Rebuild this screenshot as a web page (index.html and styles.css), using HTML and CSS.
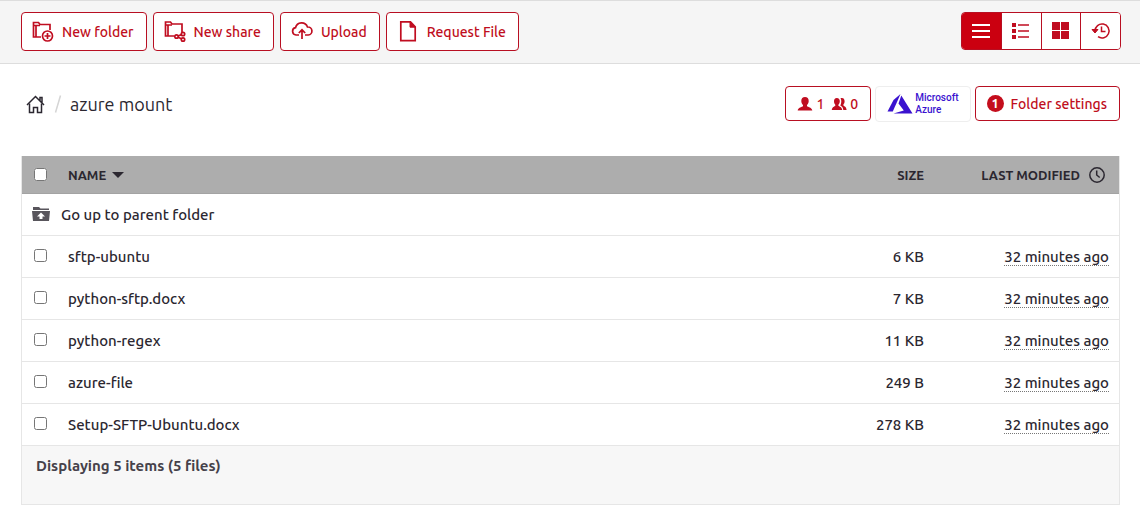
FILE: index.html
```
<!DOCTYPE html>
<html lang="en">
<head>
    <meta charset="UTF-8">
    <meta name="viewport" content="width=device-width, initial-scale=1.0">
    <title>azure mount</title>
    <link rel="stylesheet" href="styles.css">
</head>
<body>
    <header class="toolbar">
        <div class="actions">
            <button type="button" class="btn">
                <svg class="icon" viewBox="0 0 22 22" fill="none" stroke="currentColor" stroke-width="1.700">
                    <path d="M9 16H1.500V1.500h5l1.500 2h10v5.500"/>
                    <path d="M2 4.500h6M4 4v12"/>
                    <circle cx="15.500" cy="15" r="5"/>
                    <path d="M15.500 12v6M12.500 15h6"/>
                </svg>
                New folder
            </button>
            <button type="button" class="btn">
                <svg class="icon" viewBox="0 0 22 22" fill="none" stroke="currentColor" stroke-width="1.700">
                    <path d="M10 15H1.500V1h5l1.500 2h10v8.500"/>
                    <path d="M2 4h6M4 3.500v11.500"/>
                    <circle cx="12.500" cy="15.500" r="1.700"/>
                    <circle cx="19" cy="13" r="1.700"/>
                    <circle cx="19" cy="18.500" r="1.700"/>
                    <path d="M14 15l3.500-1.400M14 16.200l3.500 1.600"/>
                </svg>
                New share
            </button>
            <button type="button" class="btn">
                <svg class="icon" viewBox="0 0 22 22" fill="none" stroke="currentColor" stroke-width="1.700">
                    <path d="M8 14H5a3.700 3.700 0 0 1-.5-7.300 6.300 6.300 0 0 1 12-.7 4 4 0 0 1 .8 8h-3.300"/>
                    <path d="M11 18V9M7.800 12L11 8.800l3.200 3.200"/>
                </svg>
                Upload
            </button>
            <button type="button" class="btn">
                <svg class="icon" viewBox="0 0 22 22" fill="none" stroke="currentColor" stroke-width="1.700">
                    <path d="M3.800 .9h9.700l4.700 5v13.800H3.800z"/>
                    <path d="M13 1v5.200h5z" fill="currentColor" stroke-width="1"/>
                </svg>
                Request File
            </button>
        </div>
        <div class="views">
            <button type="button" class="view active" aria-label="List">
                <svg class="view-icon" viewBox="0 0 20 20" stroke="currentColor" stroke-width="2">
                    <path d="M1 4h18M1 10h18M1 16h18"/>
                </svg>
            </button>
            <button type="button" class="view" aria-label="Details">
                <svg class="view-icon" viewBox="0 0 20 20" stroke="currentColor">
                    <path d="M1 4h4M1 10h4M1 16h4" stroke-width="4"/>
                    <path d="M7 4h11M7 10h11M7 16h11" stroke-width="1.500"/>
                </svg>
            </button>
            <button type="button" class="view" aria-label="Grid">
                <svg class="view-icon" viewBox="0 0 20 20" fill="currentColor">
                    <path d="M1 1h8v8H1zM10 1h8v8h-8zM1 10h8v8H1zM10 10h8v8h-8z"/>
                </svg>
            </button>
            <button type="button" class="view" aria-label="History">
                <svg class="view-icon" viewBox="0 0 20 20" fill="none" stroke="currentColor" stroke-width="1.500">
                    <path d="M4 10a7 7 0 1 1 3 5.700"/>
                    <path d="M1 8.500h6L4 12z" fill="currentColor" stroke-width="1"/>
                    <path d="M10.500 5.500v5h4"/>
                </svg>
            </button>
        </div>
    </header>

    <main class="content">
        <div class="path-row">
            <nav class="breadcrumb">
                <a href="#" class="home" aria-label="Home">
                    <svg class="home-icon" viewBox="0 0 20 20" fill="none" stroke="currentColor" stroke-width="1.500">
                        <path d="M1 11L9.500 2.500 18 11M14 6.500V3.500h2v5"/>
                        <path d="M3.500 9.500v9h4v-5h4v5h4v-9"/>
                    </svg>
                </a>
                <svg class="slash" viewBox="0 0 8 18" fill="none" stroke="currentColor" stroke-width="1.500">
                    <path d="M1.500 17.500L6.500 .5"/>
                </svg>
                <span class="current">azure mount</span>
            </nav>
            <div class="folder-info">
                <button type="button" class="btn small members">
                    <svg class="info-icon" viewBox="0 0 16 16" fill="currentColor">
                        <path d="M8 1c2.400 0 3.700 1.600 3.700 4 0 1.800-.7 3.200-1.700 4v1.300c1 .8 5 1.200 5.300 4.200H.7c.3-3 4.300-3.400 5.300-4.200V9C5 8.200 4.300 6.800 4.300 5c0-2.400 1.300-4 3.700-4z"/>
                    </svg>
                    <span class="count">1</span>
                    <svg class="info-icon" viewBox="0 0 16 16" fill="currentColor">
                        <path d="M5.800 2c2 0 3 1.300 3 3.300 0 1.500-.6 2.700-1.400 3.400v1c.8.700 3.600 1.300 3.800 4.300H.8c.2-3 2.800-3.600 3.500-4.300v-1C3.500 8 3 6.800 3 5.300 3 3.300 3.800 2 5.800 2z"/>
                        <path d="M9.500 2.300c2.500-.8 4.100.5 4.100 3 0 1.500-.5 2.500-1.200 3.200v1c.8.700 3 1.300 3.200 4.500h-3.300c-.2-2.600-1.500-3.700-3-4.500 1.200-2.200 1.400-5.300.2-7.200z"/>
                    </svg>
                    <span class="count">0</span>
                </button>
                <div class="provider">
                    <svg class="azure-logo" viewBox="0 0 26 22" fill="currentColor">
                        <path d="M13.500 1L6.500 7 .5 18.500h5.300z"/>
                        <path d="M14.300 2.500L11.500 10.500l5.300 7L6.500 20.500H25.500z"/>
                    </svg>
                    <span class="provider-name">Microsoft<br>Azure</span>
                </div>
                <button type="button" class="btn small">
                    <span class="badge">1</span>
                    Folder settings
                </button>
            </div>
        </div>

        <table class="files">
            <thead>
                <tr>
                    <th class="check"><input type="checkbox" class="box" aria-label="Select all"></th>
                    <th class="name">NAME <svg class="sort" viewBox="0 0 12 6" fill="currentColor"><path d="M0 0h12L6 6z"/></svg></th>
                    <th class="size">SIZE</th>
                    <th class="modified">
                        LAST MODIFIED
                        <svg class="clock" viewBox="0 0 18 18" fill="none" stroke="currentColor" stroke-width="1.500">
                            <circle cx="9" cy="9" r="7.200"/>
                            <path d="M8.700 4.500V9l3 2.500"/>
                        </svg>
                    </th>
                </tr>
            </thead>
            <tbody>
                <tr>
                    <td colspan="4" class="parent">
                        <a href="#" class="parent-link">
                            <svg class="parent-icon" viewBox="0 0 18 16" fill="currentColor">
                                <path d="M1 0h6l1.500 1.500H17V3H1z"/>
                                <path fill-rule="evenodd" d="M0 4h18l-1 10H1zM9 5.500L5 9.500h2.500v2.500h3v-2.500H13z"/>
                            </svg>
                            Go up to parent folder
                        </a>
                    </td>
                </tr>
                <tr>
                    <td class="check"><input type="checkbox" class="box" id="file1"></td>
                    <td class="name"><label for="file1">sftp-ubuntu</label></td>
                    <td class="size">6 KB</td>
                    <td class="modified"><span class="time">32 minutes ago</span></td>
                </tr>
                <tr>
                    <td class="check"><input type="checkbox" class="box" id="file2"></td>
                    <td class="name"><label for="file2">python-sftp.docx</label></td>
                    <td class="size">7 KB</td>
                    <td class="modified"><span class="time">32 minutes ago</span></td>
                </tr>
                <tr>
                    <td class="check"><input type="checkbox" class="box" id="file3"></td>
                    <td class="name"><label for="file3">python-regex</label></td>
                    <td class="size">11 KB</td>
                    <td class="modified"><span class="time">32 minutes ago</span></td>
                </tr>
                <tr>
                    <td class="check"><input type="checkbox" class="box" id="file4"></td>
                    <td class="name"><label for="file4">azure-file</label></td>
                    <td class="size">249 B</td>
                    <td class="modified"><span class="time">32 minutes ago</span></td>
                </tr>
                <tr>
                    <td class="check"><input type="checkbox" class="box" id="file5"></td>
                    <td class="name"><label for="file5">Setup-SFTP-Ubuntu.docx</label></td>
                    <td class="size">278 KB</td>
                    <td class="modified"><span class="time">32 minutes ago</span></td>
                </tr>
            </tbody>
            <tfoot>
                <tr>
                    <td colspan="4" class="summary">Displaying 5 items (5 files)</td>
                </tr>
            </tfoot>
        </table>
    </main>
</body>
</html>
```
FILE: styles.css
```
* {
    box-sizing: border-box;
}
body {
    margin: 0;
    background: #fff;
    color: #2b2730;
    font-family: Ubuntu, "Noto Sans", sans-serif;
    font-size: 15px;
    font-weight: 500;
    line-height: 20px;
}
button {
    font: inherit;
    cursor: pointer;
}
a {
    color: inherit;
    text-decoration: none;
}
svg {
    flex: none;
}

/* toolbar */
.toolbar {
    display: flex;
    justify-content: space-between;
    align-items: flex-start;
    height: 64px;
    padding: 11px 19px 0 21px;
    background: #f5f5f5;
    border-top: 1px solid #ddd;
    border-bottom: 1px solid #ddd;
}
.actions {
    display: flex;
    gap: 6px;
}
.btn {
    display: flex;
    align-items: center;
    gap: 8px;
    height: 39px;
    padding: 0 12px 0 10px;
    border: 1px solid #b80f22;
    border-radius: 4px;
    background: #fff;
    color: #c00d20;
    font-size: 14px;
    white-space: nowrap;
}
.icon {
    width: 22px;
    height: 22px;
}
.views {
    display: flex;
    width: 160px;
    height: 38px;
    border: 1px solid #b80f22;
    border-radius: 4px;
    overflow: hidden;
}
.view {
    display: flex;
    flex: 1;
    align-items: center;
    justify-content: center;
    padding: 0;
    border: 0;
    border-left: 1px solid #b80f22;
    background: #fff;
    color: #c00d20;
}
.view:first-child {
    border-left: 0;
}
.view.active {
    background: #cb0010;
    color: #fff;
}
.view-icon {
    width: 20px;
    height: 20px;
}

/* breadcrumb row */
.content {
    padding: 22px 20px 0 21px;
}
.path-row {
    display: flex;
    justify-content: space-between;
    align-items: center;
    margin-bottom: 34px;
}
.breadcrumb {
    display: flex;
    align-items: center;
    gap: 8px;
    padding-left: 5px;
    font-size: 18px;
    font-weight: 400;
}
.home {
    display: flex;
}
.home-icon {
    width: 20px;
    height: 20px;
}
.slash {
    width: 8px;
    height: 18px;
    color: #d5d5d5;
}
.folder-info {
    display: flex;
    gap: 4px;
}
.btn.small {
    height: 35px;
    padding: 0 12px 0 11px;
    gap: 7px;
}
.btn.members {
    gap: 3px;
}
.info-icon {
    width: 16px;
    height: 16px;
}
.count + .info-icon {
    margin-left: 4px;
}
.provider {
    display: flex;
    align-items: center;
    gap: 2px;
    height: 36px;
    padding: 0 11px;
    border: 1px solid #eee;
    border-radius: 4px;
    color: #3a12cf;
}
.azure-logo {
    width: 26px;
    height: 22px;
}
.provider-name {
    font-family: Roboto, sans-serif;
    font-size: 10px;
    font-weight: 500;
    line-height: 12px;
}
.badge {
    width: 17px;
    height: 17px;
    border-radius: 50%;
    background: #c40d1c;
    color: #fff;
    font-size: 13px;
    font-weight: bold;
    line-height: 17px;
    text-align: center;
}

/* file table */
.files {
    width: 100%;
    border-collapse: separate;
    border-spacing: 0;
    border: 1px solid #e6e6e6;
    border-top: 0;
}
.files th,
.files td {
    height: 42px;
    padding: 0;
    border-bottom: 1px solid #e6e6e6;
    text-align: left;
    white-space: nowrap;
}
.files th {
    height: 38px;
    background: #adadad;
    border-bottom-color: #a3a3a3;
    font-size: 13px;
}
.files .check {
    width: 46px;
    padding-left: 12px;
}
.box {
    display: block;
    width: 13px;
    height: 13px;
    margin: 0 0 2px;
}
.files th .box {
    margin: 0;
}
.files .size {
    width: 120px;
    text-align: right;
}
.files .modified {
    width: 195px;
    padding-right: 10px;
    text-align: right;
}
.files th.modified {
    padding-right: 13px;
}
.sort {
    width: 12px;
    height: 6px;
    margin-left: 3px;
    vertical-align: 2px;
}
.clock {
    width: 18px;
    height: 18px;
    margin-left: 5px;
    vertical-align: -4px;
}
.time {
    border-bottom: 1px dotted #777;
    line-height: 17px;
    display: inline-block;
}
.parent-link {
    display: flex;
    align-items: center;
    gap: 11px;
    padding-left: 10px;
}
.parent-icon {
    width: 18px;
    height: 16px;
    color: #58555c;
}
.files .summary {
    height: 58px;
    padding: 10px 14px;
    border-bottom: 0;
    background: #f7f7f7;
    color: #45414a;
    font-weight: bold;
    vertical-align: top;
}
```
